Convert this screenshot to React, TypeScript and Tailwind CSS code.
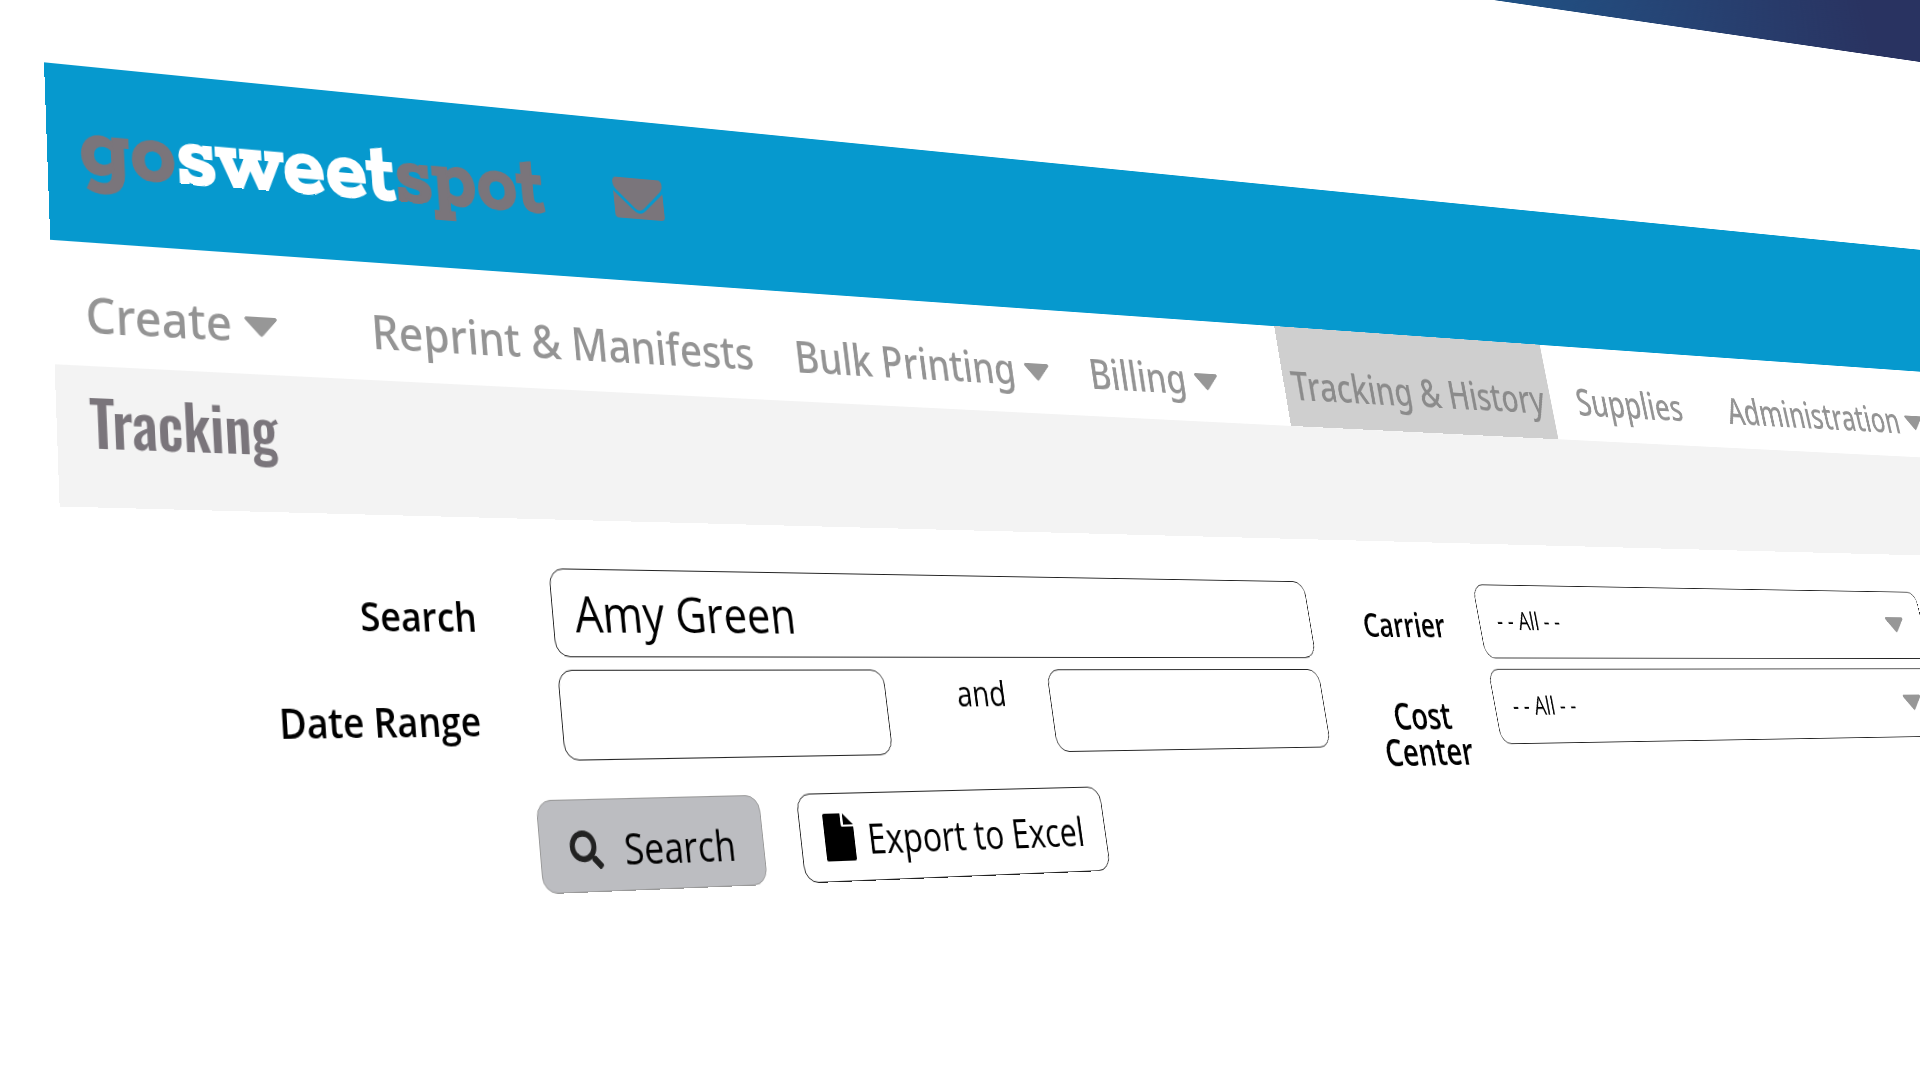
import { useState } from "react";
import { FaSearch } from "react-icons/fa";

const navItems = [
  { label: "Create", menu: true, className: "ml-8" },
  { label: "Reprint & Manifests", menu: false, className: "ml-25" },
  { label: "Bulk Printing", menu: true, className: "ml-13" },
  { label: "Billing", menu: true, className: "ml-14" },
  { label: "Tracking & History", menu: false, active: true, className: "ml-25 pl-3 pr-3" },
  { label: "Supplies", menu: false, className: "ml-11" },
  { label: "Administration", menu: true, className: "ml-21" },
];

const Caret = ({ className = "" }: { className?: string }) => (
  <svg viewBox="0 0 36 21" className={`text-[#979797] ${className}`} aria-hidden="true">
    <path
      d="M3 1.5h30c1.500 0 2 1.300 1 2.400L19.500 19c-.9 1-2.100 1-3 0L2 3.900C1 2.800 1.500 1.500 3 1.500Z"
      fill="currentColor"
      stroke="currentColor"
      strokeLinejoin="round"
    />
  </svg>
);

const EnvelopeIcon = () => (
  <svg viewBox="0 0 60 44" className="h-11 w-[60px]" fill="currentColor" aria-hidden="true">
    <path d="M5 0h50c3 0 5 2 5 5 0 4-1 6-4 9L36 32c-4 3.500-8 3.500-12 0L4 14C1 11 0 9 0 5c0-3 2-5 5-5Z" />
    <path d="M0 15l23 20c4.500 4 9.500 4 14 0l23-20v25c0 2.500-1.500 4-4 4H4c-2.500 0-4-1.500-4-4V15Z" />
  </svg>
);

const FileIcon = () => (
  <svg viewBox="0 0 36 46" className="h-[46px] w-9" fill="currentColor" aria-hidden="true">
    <path d="M2 0h19v11c0 1.500.5 2 2 2h13v31c0 1.200-.8 2-2 2H2c-1.200 0-2-.8-2-2V2C0 .8.800 0 2 0Z" />
    <path d="M24 0l12 11H24Z" />
  </svg>
);

const fieldClass = "h-[86px] rounded-2xl border border-[#222] bg-white text-black outline-none";

const AllSelect = ({ id }: { id: string }) => (
  <div className="relative w-[795px]">
    <select id={id} className={`${fieldClass} w-full appearance-none pl-7 pb-1 text-[30px]`}>
      <option>- - All - -</option>
    </select>
    <Caret className="pointer-events-none absolute right-9 top-8 h-[21px] w-9" />
  </div>
);

export default function App() {
  const [search, setSearch] = useState("Amy Green");

  return (
    <div className="h-screen overflow-hidden bg-white font-['Open_Sans','Noto_Sans',sans-serif]">
      {/* The whole page is tilted away from the viewer */}
      <div className="w-[180%] origin-[0_400px] [transform:matrix3d(1.00731,0.043854,0,0.00016611,0.030241,1.03811,0,-0.00011284,0,0,1,0,44,-337.7,0,1)]">
        <div className="h-[117px] bg-linear-to-r from-[#1f5184] from-58% to-[#293361] to-79%" />

        <header className="mt-[283px] flex h-[174px] items-center bg-[#0699ce] pb-1 pl-8">
          <a
            href="#home"
            className="font-['Rokkitt','DejaVu_Serif',serif] text-[94px] leading-none font-bold text-[#7a757b] [-webkit-text-stroke:2px_currentColor]"
          >
            go<span className="text-white">sweet</span>spot
          </a>
          <a href="#messages" aria-label="Messages" className="ml-21 text-[#7a757b]">
            <EnvelopeIcon />
          </a>
        </header>

        <nav className="flex h-[118px] font-['Noto_Sans',sans-serif] text-[47px] font-medium text-[#949494]">
          {navItems.map((item) => (
            <a
              key={item.label}
              href="#nav"
              className={`flex shrink-0 items-center gap-3 whitespace-nowrap pt-5 ${item.active ? "bg-[#cfcfcf] text-[#8b8b8b]" : ""} ${item.className}`}
            >
              {item.label}
              {item.menu && <Caret className="mt-1 h-[21px] w-9" />}
            </a>
          ))}
        </nav>

        <div className="h-[131px] bg-[#f3f3f3] pt-2 pl-8">
          <h1 className="font-['Oswald','Lato',sans-serif] text-[58px] font-medium text-[#7a757b]">
            Tracking
          </h1>
        </div>

        <form className="mt-12 flex" onSubmit={(e) => e.preventDefault()}>
          <div>
            <div className="grid grid-cols-[419px_984px] items-center gap-x-[84px] gap-y-3 text-[38px]">
              <label htmlFor="search" className="pt-2 text-right font-semibold">Search</label>
              <input
                id="search"
                value={search}
                onChange={(e) => setSearch(e.target.value)}
                className={`${fieldClass} w-full px-6 text-[50px]`}
              />
              <label htmlFor="from" className="pt-2 pr-1 text-right font-semibold">Date Range</label>
              <div className="flex justify-between">
                <input id="from" aria-label="Date from" className={`${fieldClass} w-[386px]`} />
                <label htmlFor="to" className="ml-8 text-4xl leading-[50px]">and</label>
                <input id="to" className={`${fieldClass} w-[386px]`} />
              </div>
            </div>

            <div className="mt-9 ml-[467px] flex gap-11 text-[40px]">
              <button type="submit" className="flex h-[86px] w-[253px] items-center gap-6 rounded-2xl border border-[#999] bg-[#bcbdc1] pt-2 pl-8">
                <FaSearch className="size-9 text-[#222]" />
                Search
              </button>
              <button type="button" className="flex h-[86px] w-[386px] items-center gap-4 rounded-2xl border border-[#222] bg-white pl-7">
                <FileIcon />
                <span className="pt-1">Export to Excel</span>
              </button>
            </div>
          </div>

          <div className="ml-20 grid auto-rows-min grid-cols-[134px_795px] gap-x-[50px] gap-y-3">
            <label htmlFor="carrier" className="self-center pt-2 text-[38px] font-semibold">Carrier</label>
            <AllSelect id="carrier" />
            <label htmlFor="cost" className="pt-8 text-center text-[42px] leading-10 font-semibold">Cost Center</label>
            <AllSelect id="cost" />
          </div>
        </form>
      </div>
    </div>
  );
}
